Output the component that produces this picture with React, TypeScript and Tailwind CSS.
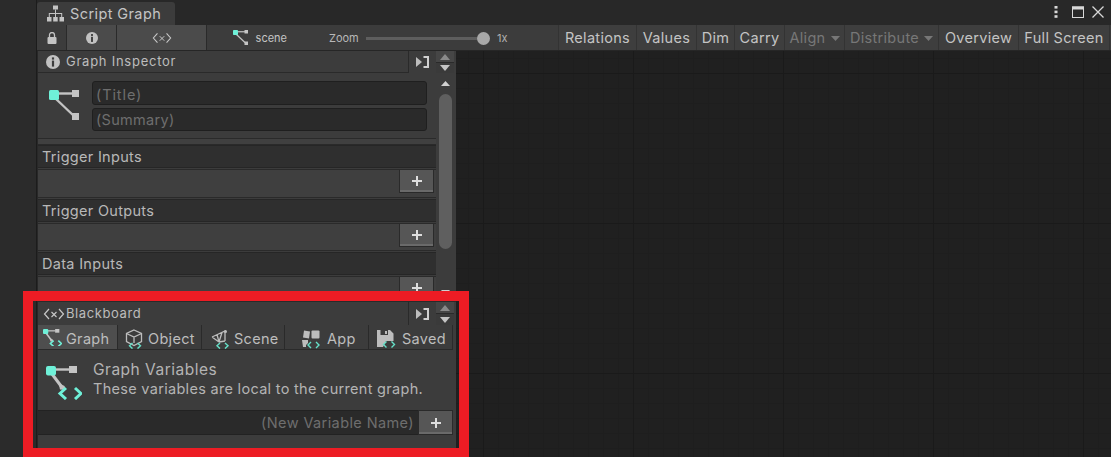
import React from "react";

const TEAL = "#6ff0d8";
const GREY = "#c4c4c4";

function Graph({ size = 30 }: { size?: number }) {
  return (
    <svg width={size} height={size} viewBox="0 0 30 30" fill="none" className="shrink-0">
      <path d="M8 3.5H24" stroke={GREY} strokeWidth="2.4" />
      <path d="M7 9L25 26" stroke={GREY} strokeWidth="2.4" />
      <rect x="23" y="0" width="7" height="7" fill={GREY} />
      <rect x="23" y="23" width="7" height="7" fill={GREY} />
      <rect x="0" y="0" width="10" height="10" rx="1.5" fill={TEAL} />
    </svg>
  );
}

function GraphCode({ width = 36 }: { width?: number }) {
  return (
    <svg width={width} height={(width * 34) / 36} viewBox="0 0 36 34" fill="none" className="shrink-0">
      <path d="M8 3.5H24" stroke={GREY} strokeWidth="2.4" />
      <path d="M6 8L15 20" stroke={GREY} strokeWidth="3" />
      <path d="M12.5 17l6 3 1.5 4-6-.5z" fill={GREY} />
      <rect x="23" y="0" width="8" height="7" fill={GREY} />
      <rect x="0" y="0" width="10" height="9.5" rx="2" fill={TEAL} />
      <path d="M20 22L14 27.5l6 5.5M29 22l6 5.5-6 5.5" stroke={TEAL} strokeWidth="3" />
    </svg>
  );
}

function Code({ w = 20 }: { w?: number }) {
  const c = "#c8c8c8";
  return (
    <svg width={w} height="12" viewBox="0 0 22 12" fill="none" className="shrink-0">
      <path d="M6 1L1.5 6 6 11M16 1L20.5 6 16 11" stroke={c} strokeWidth="1.2" />
      <path d="M8.5 4l5 5M13.5 4l-5 5" stroke={c} strokeWidth="1.1" />
    </svg>
  );
}

function Info({ size = 14 }: { size?: number }) {
  return (
    <svg width={size} height={size} viewBox="0 0 14 14" className="shrink-0">
      <circle cx="7" cy="7" r="7" fill="#c2c2c2" />
      <rect x="5.9" y="2.4" width="2.2" height="2.2" fill="#3c3c3c" />
      <rect x="5.9" y="5.6" width="2.2" height="6" fill="#3c3c3c" />
    </svg>
  );
}

function Plus() {
  return (
    <svg width="10" height="10" viewBox="0 0 10 10">
      <path d="M5 0v10M0 5h10" stroke="#dedede" strokeWidth="2" />
    </svg>
  );
}

function Arrows() {
  return (
    <div className="flex h-full w-[18px] flex-col">
      <div className="flex h-[12px] items-center justify-center border-b border-[#2a2a2a] bg-[#464646]">
        <svg width="10" height="6" viewBox="0 0 10 6"><path d="M5 0l5 6H0z" fill="#8a8a8a" /></svg>
      </div>
      <div className="flex flex-1 items-center justify-center bg-[#3a3a3a]">
        <svg width="10" height="6" viewBox="0 0 10 6"><path d="M5 6l5-6H0z" fill="#c4c4c4" /></svg>
      </div>
    </div>
  );
}

function Collapse() {
  return (
    <svg width="13" height="12" viewBox="0 0 13 12">
      <path d="M0 1l6 5-6 5z" fill="#bdbdbd" />
      <path d="M7.5 1H12v10H7.5" fill="none" stroke="#d0d0d0" strokeWidth="2" />
    </svg>
  );
}

function ToolButton({ label, w, dim, caret }: { label: string; w: string; dim?: boolean; caret?: boolean }) {
  return (
    <div className={`flex h-full items-center justify-center gap-[5px] bg-[#3e3e3e] pt-[1px] text-[14.5px] tracking-[0.3px] ${w} ${dim ? "text-[#777]" : "text-[#c4c4c4]"}`}>
      <span>{label}</span>
      {caret && (
        <svg width="9" height="5" viewBox="0 0 9 5"><path d="M0 0h9L4.5 5z" fill="#777" /></svg>
      )}
    </div>
  );
}

function Section({ title, listH, clip }: { title: string; listH: string; clip?: boolean }) {
  return (
    <div className="flex flex-col">
      <div className="flex h-[23px] items-center border-y border-[#262626] bg-[#2f2f2f] pl-[4px] text-[14.5px] tracking-[0.3px] text-[#b8b8b8]">{title}</div>
      <div className={`mt-[1px] flex ${listH} items-start justify-end border-t border-[#2a2a2a] bg-[#3f3f3f] pr-[2px] ${clip ? "" : "border-b"}`}>
        <div className="flex h-[23px] w-[35px] items-center justify-center border border-t-0 border-[#2a2a2a] bg-[#565656] [box-shadow:inset_0_-2px_0_#6a6a6a]">
          <Plus />
        </div>
      </div>
    </div>
  );
}

function TabIcon({ kind }: { kind: string }) {
  const c = "#bdbdbd";
  const t = "#65e0c8";
  return (
    <div className="mt-[3px] h-[20px] w-[20px] shrink-0">
      {kind === "graph" && <GraphCode width={19} />}
      {kind === "object" && (
        <svg width="20" height="20" viewBox="0 0 20 20" fill="none">
          <path d="M9 1l7.5 3.5v8L9 16.5l-7.5-4v-8zM1.5 4.5L9 8l7.5-3.5M9 8v6" stroke={c} strokeWidth="1.3" />
          <path d="M7.5 14l-3 2.8 3 2.8M12.5 14l3 2.8-3 2.8" stroke={t} strokeWidth="1.4" />
        </svg>
      )}
      {kind === "scene" && (
        <svg width="20" height="20" viewBox="0 0 20 20" fill="none">
          <path d="M1 8l13-6v10M1 8l7 5M6 5.5l2 7.5M11 3.5l-3 9.5M14 12l-6 1" stroke={c} strokeWidth="1.3" />
          <circle cx="14.5" cy="2.5" r="1.5" fill={c} />
          <path d="M9 14l-3 2.8 3 2.8M14 14l3 2.8-3 2.8" stroke={t} strokeWidth="1.4" />
        </svg>
      )}
      {kind === "app" && (
        <svg width="20" height="20" viewBox="0 0 20 20" fill="none">
          <path d="M3 1.5l6 1-1 7-6-1z" fill={c} />
          <rect x="10.5" y="1.5" width="8" height="8" rx="1" fill={c} />
          <path d="M1 11h6v3l-2 2v2H2z" fill={c} />
          <path d="M10 13l-3 3 3 3M15 13l3 3-3 3" stroke={t} strokeWidth="1.4" />
        </svg>
      )}
      {kind === "saved" && (
        <svg width="20" height="20" viewBox="0 0 20 20" fill="none">
          <path d="M1 1h13l3.5 3.5V12H10l-3 6H1z" fill={c} />
          <rect x="4.5" y="1" width="7.5" height="5" fill="#3c3c3c" />
          <rect x="9" y="2" width="2" height="3" fill={c} />
          <path d="M10.5 12.5l-3 3 3 3M15.5 12.5l3 3-3 3" stroke={t} strokeWidth="1.4" />
        </svg>
      )}
    </div>
  );
}

function BoardTab({ label, kind, w, active, pad }: { label: string; kind: string; w: string; active?: boolean; pad: string }) {
  return (
    <div className={`flex h-full items-center border-r border-[#2a2a2a] text-[14.5px] tracking-[0.3px] text-[#bdbdbd] ${w} ${pad} ${active ? "bg-[#4e4e4e]" : "bg-[#3c3c3c]"}`}>
      <TabIcon kind={kind} />
      <span className="pt-[3px]">{label}</span>
    </div>
  );
}

export default function App() {
  return (
    <div className="relative flex h-[457px] w-[1111px] overflow-hidden bg-[#282828] font-['Inter',sans-serif]">
      <div className="h-full w-[37px] shrink-0 border-r border-[#1c1c1c] bg-[#2b2b2b]" />
      <div className="flex min-w-0 flex-1 flex-col">
        {/* tab strip */}
        <div className="flex h-[25px] shrink-0 items-end justify-between bg-[#282828]">
          <div className="flex h-[23px] w-[138px] items-center gap-[6px] rounded-t-[3px] bg-[#3c3c3c] pl-[10px] text-[14.5px] tracking-[0.4px] text-[#c4c4c4]">
            <svg width="17" height="17" viewBox="0 0 17 17" fill="#c4c4c4">
              <rect x="6" y="0.5" width="5" height="4" />
              <rect x="0" y="12" width="4.5" height="4.5" />
              <rect x="6.2" y="12" width="4.5" height="4.5" />
              <rect x="12.5" y="12" width="4.5" height="4.5" />
              <path d="M8 4.5h1v3.5h6.2v4h-1V9H9v3H8V9H2.8v3h-1V8H8z" />
            </svg>
            <span className="pt-[1px]">Script Graph</span>
          </div>
          <div className="mb-[7px] mr-[7px] flex items-center">
            <svg width="4" height="12" viewBox="0 0 4 12" fill="#d8d8d8"><rect x="0.5" y="0" width="3" height="2.6" /><rect x="0.5" y="4.6" width="3" height="2.6" /><rect x="0.5" y="9.2" width="3" height="2.6" /></svg>
            <svg className="ml-[14px]" width="12" height="12" viewBox="0 0 12 12" fill="none"><rect x="0.5" y="1" width="11" height="10.5" stroke="#d8d8d8" /><rect x="0" y="0.5" width="12" height="3" fill="#d8d8d8" /></svg>
            <svg className="ml-[8px]" width="12" height="12" viewBox="0 0 12 12" fill="none"><path d="M0.5 0.5l11 11M11.5 0.5l-11 11" stroke="#d8d8d8" strokeWidth="1.3" /></svg>
          </div>
        </div>

        {/* toolbar */}
        <div className="flex h-[26px] shrink-0 items-stretch border-b border-[#262626] bg-[#3c3c3c] pl-[1px]">
          <div className="flex w-[29px] items-center justify-center border-r border-[#2a2a2a]">
            <svg width="10" height="12" viewBox="0 0 10 12"><rect x="0.5" y="5" width="9" height="7" rx="1" fill="#c4c4c4" /><path d="M2.5 5V3a2.5 2.5 0 015 0v2" stroke="#c4c4c4" strokeWidth="1.3" fill="none" /></svg>
          </div>
          <div className="flex w-[50px] items-center justify-center border-r border-[#2a2a2a] bg-[#4b4b4b]"><Info size={12} /></div>
          <div className="flex w-[90px] items-center justify-center border-r border-[#2a2a2a] bg-[#4b4b4b]"><Code w={20} /></div>
          <div className="flex w-[98px] items-center justify-end gap-[8px] pr-[18px] text-[11px] text-[#c4c4c4]">
            <Graph size={15} />
            <span className="pt-[2px]">scene</span>
          </div>
          <div className="box-content flex w-[34px] items-center pl-[24px] pr-[3px] pt-[2px] text-[11px] text-[#b8b8b8]">Zoom</div>
          <div className="flex w-[192px] items-center pt-[2px]">
            <div className="relative h-[3px] w-[118px] bg-[#5e5e5e]">
              <div className="absolute right-[-6px] top-[-5px] h-[13px] w-[13px] rounded-full bg-[#a8a8a8]" />
            </div>
            <span className="ml-[13px] text-[11px] text-[#b0b0b0]">1x</span>
          </div>
          <div className="flex flex-1 items-stretch gap-[1px] bg-[#333] pl-[1px]">
            <ToolButton label="Relations" w="w-[77px]" />
            <ToolButton label="Values" w="w-[59px]" />
            <ToolButton label="Dim" w="w-[37px]" />
            <ToolButton label="Carry" w="w-[49px]" />
            <ToolButton label="Align" w="w-[59px]" dim caret />
            <ToolButton label="Distribute" w="w-[93px]" dim caret />
            <ToolButton label="Overview" w="w-[79px]" />
            <ToolButton label="Full Screen" w="w-[90px]" />
            <div className="flex-1 bg-[#3c3c3c]" />
          </div>
        </div>

        {/* body */}
        <div className="flex min-h-0 flex-1">
          <div className="ml-[1px] flex w-[418px] shrink-0 flex-col overflow-hidden bg-[#3c3c3c]">
            {/* inspector */}
            <div className="flex h-[250px] shrink-0 flex-col overflow-hidden">
              <div className="flex h-[22px] shrink-0 items-stretch">
                <div className="flex flex-1 items-center gap-[6px] border-b border-[#2a2a2a] pl-[8px] text-[13px] tracking-[0.75px] text-[#bdbdbd]">
                  <Info />
                  <span>Graph Inspector</span>
                </div>
                <div className="flex w-[28px] items-center justify-center border-l border-[#2a2a2a]"><Collapse /></div>
                <Arrows />
                <div className="w-[2px]" />
              </div>
              <div className="flex min-h-0 flex-1">
                <div className="flex w-[398px] shrink-0 flex-col">
                  <div className="flex h-[65px] shrink-0 pl-[11px] pt-[8px]">
                    <div className="w-[43px] shrink-0 pt-[9px]"><Graph size={30} /></div>
                    <div className="flex w-[335px] flex-col gap-[3px]">
                      <div className="flex h-[24px] items-center rounded-[3px] border border-[#1f1f1f] bg-[#2a2a2a] pl-[3px] pt-[3px] text-[14.5px] tracking-[0.9px] text-[#6e6e6e]">(Title)</div>
                      <div className="flex h-[23px] items-center rounded-[3px] border border-[#1f1f1f] bg-[#2a2a2a] pl-[3px] text-[14.5px] tracking-[0.3px] text-[#6e6e6e]">(Summary)</div>
                    </div>
                  </div>
                  <div className="h-[7px] shrink-0 border-y border-[#2a2a2a] bg-[#404040]" />
                  <Section title="Trigger Inputs" listH="h-[29px]" />
                  <div className="h-[1px] shrink-0" />
                  <Section title="Trigger Outputs" listH="h-[28px]" />
                  <div className="h-[1px] shrink-0" />
                  <Section title="Data Inputs" listH="h-[30px]" clip />
                </div>
                <div className="flex w-[20px] shrink-0 flex-col items-center pr-[2px] pt-[8px]">
                  <svg width="9" height="5" viewBox="0 0 9 5"><path d="M4.5 0L9 5H0z" fill="#d0d0d0" /></svg>
                  <div className="mt-[8px] h-[155px] w-[13px] rounded-full bg-[#5f5f5f]" />
                  <svg className="mb-[6px] mt-auto" width="9" height="5" viewBox="0 0 9 5"><path d="M4.5 5L9 0H0z" fill="#d0d0d0" /></svg>
                </div>
              </div>
            </div>
            {/* blackboard */}
            <div className="flex flex-1 flex-col border-t border-[#2a2a2a]">
              <div className="flex h-[23px] shrink-0 items-stretch">
                <div className="flex flex-1 items-center gap-[1px] pl-[5px] text-[13px] tracking-[0.6px] text-[#bdbdbd]">
                  <Code w={22} />
                  <span>Blackboard</span>
                </div>
                <div className="flex w-[28px] items-center justify-center border-l border-[#2a2a2a]"><Collapse /></div>
                <Arrows />
                <div className="w-[2px]" />
              </div>
              <div className="flex h-[25px] w-[415px] shrink-0 items-stretch border-b border-[#2a2a2a]">
                <BoardTab label="Graph" kind="graph" w="w-[80px]" pad="pl-[5px] gap-[3px]" active />
                <BoardTab label="Object" kind="object" w="w-[84px]" pad="pl-[7px] gap-[3px]" />
                <BoardTab label="Scene" kind="scene" w="w-[83px]" pad="pl-[9px] gap-[3px]" />
                <BoardTab label="App" kind="app" w="w-[84px]" pad="pl-[16px] gap-[6px]" />
                <BoardTab label="Saved" kind="saved" w="w-[84px]" pad="pl-[7px] gap-[6px]" />
              </div>
              <div className="flex h-[60px] shrink-0 pl-[8px] pt-[11px]">
                <div className="w-[47px] shrink-0 pt-[5px]"><GraphCode /></div>
                <div className="flex flex-col text-[#b4b4b4]">
                  <span className="text-[15.5px] leading-[18px] tracking-[0.5px]">Graph Variables</span>
                  <span className="text-[14.5px] leading-[20px] tracking-[0.3px]">These variables are local to the current graph.</span>
                </div>
              </div>
              <div className="flex h-[25px] w-[415px] shrink-0 items-stretch">
                <div className="flex flex-1 items-center justify-end border-y border-[#222] bg-[#2a2a2a] pr-[4px] text-[14.5px] tracking-[0.4px] text-[#6e6e6e]">(New Variable Name)</div>
                <div className="flex w-[35px] items-center justify-center border border-[#2a2a2a] bg-[#565656] [box-shadow:inset_0_-2px_0_#6a6a6a]"><Plus /></div>
              </div>
            </div>
          </div>
          {/* canvas */}
          <div className="flex-1 bg-[#202020] [background-image:linear-gradient(to_right,#1a1a1a_1px,transparent_1px),linear-gradient(to_bottom,#1a1a1a_1px,transparent_1px),linear-gradient(to_right,#1e1e1e_1px,transparent_1px),linear-gradient(to_bottom,#1e1e1e_1px,transparent_1px)] [background-size:150px_150px,150px_150px,15px_15px,15px_15px] [background-position:27px_22px,27px_22px,12px_7px,12px_7px]" />
        </div>
      </div>
      {/* annotation */}
      <div className="pointer-events-none absolute left-[23px] top-[291px] h-[166px] w-[446px] border-x-[10px] border-b-[9px] border-t-[10px] border-[#ed1c24]" />
    </div>
  );
}
